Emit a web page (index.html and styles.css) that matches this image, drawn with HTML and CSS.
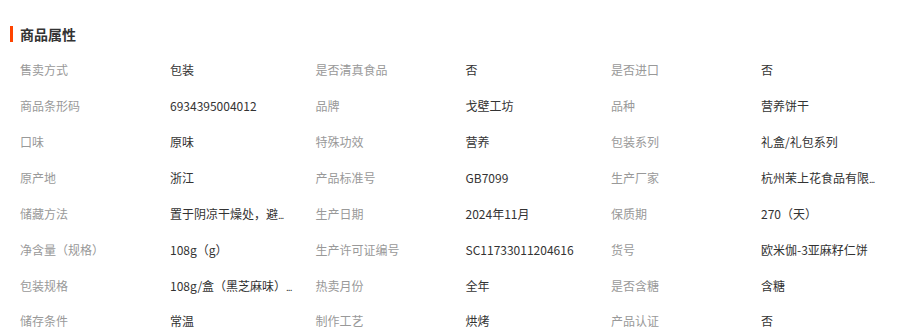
FILE: index.html
```html
<!DOCTYPE html>
<html lang="zh-CN">
<head>
<meta charset="utf-8">
<link rel="stylesheet" href="styles.css">
</head>
<body>
<section class="attrs">
  <h2 class="title">商品属性</h2>
  <div class="grid">
    <div class="item"><span class="k">售卖方式</span><span class="v">包装</span></div>
    <div class="item"><span class="k">是否清真食品</span><span class="v">否</span></div>
    <div class="item"><span class="k">是否进口</span><span class="v">否</span></div>
    <div class="item"><span class="k">商品条形码</span><span class="v">6934395004012</span></div>
    <div class="item"><span class="k">品牌</span><span class="v">戈壁工坊</span></div>
    <div class="item"><span class="k">品种</span><span class="v">营养饼干</span></div>
    <div class="item"><span class="k">口味</span><span class="v">原味</span></div>
    <div class="item"><span class="k">特殊功效</span><span class="v">营养</span></div>
    <div class="item"><span class="k">包装系列</span><span class="v">礼盒/礼包系列</span></div>
    <div class="item"><span class="k">原产地</span><span class="v">浙江</span></div>
    <div class="item"><span class="k">产品标准号</span><span class="v">GB7099</span></div>
    <div class="item"><span class="k">生产厂家</span><span class="v">杭州茉上花食品有限<span class="dots">...</span></span></div>
    <div class="item"><span class="k">储藏方法</span><span class="v">置于阴凉干燥处，避<span class="dots">...</span></span></div>
    <div class="item"><span class="k">生产日期</span><span class="v">2024年11月</span></div>
    <div class="item"><span class="k">保质期</span><span class="v">270（天）</span></div>
    <div class="item"><span class="k">净含量（规格）</span><span class="v">108g（g）</span></div>
    <div class="item"><span class="k">生产许可证编号</span><span class="v">SC11733011204616</span></div>
    <div class="item"><span class="k">货号</span><span class="v">欧米伽-3亚麻籽仁饼</span></div>
    <div class="item"><span class="k">包装规格</span><span class="v">108g/盒（黑芝麻味）<span class="dots">...</span></span></div>
    <div class="item"><span class="k">热卖月份</span><span class="v">全年</span></div>
    <div class="item"><span class="k">是否含糖</span><span class="v">含糖</span></div>
    <div class="item"><span class="k">储存条件</span><span class="v">常温</span></div>
    <div class="item"><span class="k">制作工艺</span><span class="v">烘烤</span></div>
    <div class="item"><span class="k">产品认证</span><span class="v">否</span></div>
  </div>
</section>
</body>
</html>
```
FILE: styles.css
```css
* { box-sizing: border-box; }
html, body { margin: 0; padding: 0; background: #fff; }
body {
  font-family: "Noto Sans CJK SC", "Noto Sans", sans-serif;
  font-size: 12px;
  overflow: hidden;
}
.attrs {
  padding: 26px 0 0 10px;
}
.title {
  margin: 0;
  height: 16px;
  line-height: 16px;
  border-left: 3px solid #ff4400;
  padding-left: 7px;
  font-size: 14px;
  font-weight: bold;
  color: #333;
}
.grid {
  display: grid;
  grid-template-columns: repeat(3, 295.5px);
  grid-auto-rows: 35.86px;
  margin-top: 10px;
  padding-left: 10px;
  width: 900px;
}
.item {
  display: flex;
  align-items: center;
  white-space: nowrap;
}
.k {
  width: 150px;
  flex: none;
  color: #999;
}
.v {
  flex: none;
  color: #333;
}
.dots {
  font-size: 10px;
  letter-spacing: -1px;
}
```
